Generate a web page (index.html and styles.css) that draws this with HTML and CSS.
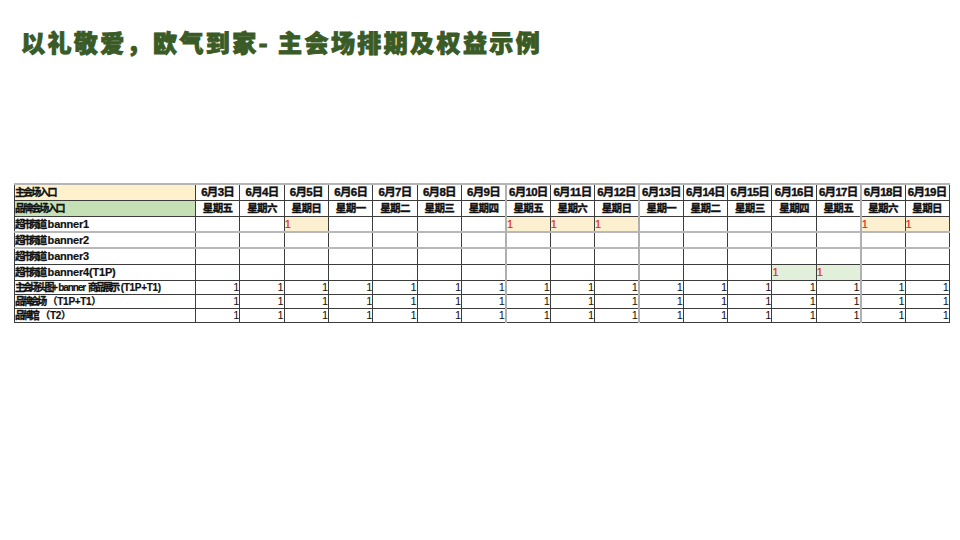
FILE: index.html
```html
<!DOCTYPE html>
<html lang="zh-CN">
<head>
<meta charset="utf-8">
<title>主会场排期及权益示例</title>
<link rel="stylesheet" href="styles.css">
</head>
<body>
<h1 class="title">以礼敬爱，欧气到家- 主会场排期及权益示例</h1>
<table class="sheet">
  <colgroup>
    <col class="c-label">
    <col span="17" class="c-day">
  </colgroup>
  <tbody>
    <tr class="h1row">
      <td class="lbl yl"><span class="cj hd">主会场入口</span></td>
      <td class="date">6月3日</td><td class="date">6月4日</td><td class="date">6月5日</td><td class="date">6月6日</td><td class="date">6月7日</td><td class="date">6月8日</td><td class="date">6月9日</td><td class="date">6月10日</td><td class="date">6月11日</td><td class="date">6月12日</td><td class="date">6月13日</td><td class="date">6月14日</td><td class="date">6月15日</td><td class="date">6月16日</td><td class="date">6月17日</td><td class="date">6月18日</td><td class="date">6月19日</td>
    </tr>
    <tr class="h2row">
      <td class="lbl gl"><span class="cj hd">品牌会场入口</span></td>
      <td class="wk">星期五</td><td class="wk">星期六</td><td class="wk">星期日</td><td class="wk">星期一</td><td class="wk">星期二</td><td class="wk">星期三</td><td class="wk">星期四</td><td class="wk">星期五</td><td class="wk">星期六</td><td class="wk">星期日</td><td class="wk">星期一</td><td class="wk">星期二</td><td class="wk">星期三</td><td class="wk">星期四</td><td class="wk">星期五</td><td class="wk">星期六</td><td class="wk">星期日</td>
    </tr>
    <tr class="brow">
      <td class="lbl"><span class="cj">超市频道</span>banner1</td>
      <td></td><td></td><td class="yc">1</td><td></td><td></td><td></td><td></td><td class="yc">1</td><td class="yc">1</td><td class="yc">1</td><td></td><td></td><td></td><td></td><td></td><td class="yc">1</td><td class="yc">1</td>
    </tr>
    <tr class="brow">
      <td class="lbl"><span class="cj">超市频道</span>banner2</td>
      <td></td><td></td><td></td><td></td><td></td><td></td><td></td><td></td><td></td><td></td><td></td><td></td><td></td><td></td><td></td><td></td><td></td>
    </tr>
    <tr class="brow">
      <td class="lbl"><span class="cj">超市频道</span>banner3</td>
      <td></td><td></td><td></td><td></td><td></td><td></td><td></td><td></td><td></td><td></td><td></td><td></td><td></td><td></td><td></td><td></td><td></td>
    </tr>
    <tr class="brow">
      <td class="lbl"><span class="cj">超市频道</span>banner4(T1P)</td>
      <td></td><td></td><td></td><td></td><td></td><td></td><td></td><td></td><td></td><td></td><td></td><td></td><td></td><td class="gc">1</td><td class="gc">1</td><td></td><td></td>
    </tr>
    <tr class="nrow">
      <td class="lbl sm"><span class="cj">主会场头图+</span><span class="nb">banner</span><span class="cj">商品展示</span>(T1P+T1)</td>
      <td class="n">1</td><td class="n">1</td><td class="n">1</td><td class="n">1</td><td class="n">1</td><td class="n">1</td><td class="n">1</td><td class="n">1</td><td class="n">1</td><td class="n">1</td><td class="n">1</td><td class="n">1</td><td class="n">1</td><td class="n">1</td><td class="n">1</td><td class="n">1</td><td class="n">1</td>
    </tr>
    <tr class="nrow">
      <td class="lbl sm"><span class="cj">品牌会场</span>（T1P+T1）</td>
      <td class="n">1</td><td class="n">1</td><td class="n">1</td><td class="n">1</td><td class="n">1</td><td class="n">1</td><td class="n">1</td><td class="n">1</td><td class="n">1</td><td class="n">1</td><td class="n">1</td><td class="n">1</td><td class="n">1</td><td class="n">1</td><td class="n">1</td><td class="n">1</td><td class="n">1</td>
    </tr>
    <tr class="nrow">
      <td class="lbl sm"><span class="cj">品牌馆</span>（T2）</td>
      <td class="n">1</td><td class="n">1</td><td class="n">1</td><td class="n">1</td><td class="n">1</td><td class="n">1</td><td class="n">1</td><td class="n">1</td><td class="n">1</td><td class="n">1</td><td class="n">1</td><td class="n">1</td><td class="n">1</td><td class="n">1</td><td class="n">1</td><td class="n">1</td><td class="n">1</td>
    </tr>
  </tbody>
</table>
</body>
</html>
```

FILE: styles.css
```css
html, body {
  margin: 0;
  padding: 0;
  background: #ffffff;
}

body {
  width: 960px;
  height: 540px;
  overflow: hidden;
  font-family: "Liberation Sans", "Noto Sans CJK SC", sans-serif;
}

.title {
  margin: 27px 0 0 21px;
  height: 30px;
  line-height: 30px;
  font-family: "Noto Sans CJK SC", sans-serif;
  font-weight: 900;
  font-size: 24px;
  letter-spacing: 2.4px;
  color: #3a5a26;
  -webkit-text-stroke: 0.9px #3a5a26;
  white-space: nowrap;
}

.sheet {
  margin: 126px 0 0 14px;
  border-collapse: collapse;
  table-layout: fixed;
  width: 935px;
  color: #111;
}

.c-label { width: 181px; }
.c-day { width: 44.35px; }

.sheet td {
  border: 1px solid #3c3c3c;
  padding: 0;
  overflow: hidden;
  white-space: nowrap;
  font-family: "Liberation Sans", "Noto Sans CJK SC", sans-serif;
}

.sheet tr:first-child td { border-top: 2px solid #b5b5b5; }

.sheet td:nth-child(9),
.sheet td:nth-child(12),
.sheet td:nth-child(17) {
  border-left: 2px solid #b0b0b0;
}

.sheet tr:nth-child(4) td,
.sheet tr:nth-child(5) td {
  border-top: 2px solid #b8b8b8;
}

.h1row { height: 16px; }
.h2row { height: 16px; }
.brow { height: 16px; }
.nrow { height: 14px; }

.lbl {
  font-weight: 700;
  font-size: 11px;
  padding-left: 1px;
  letter-spacing: -0.2px;
  line-height: 12px;
  -webkit-text-stroke: 0.2px #111;
}

.lbl .cj {
  font-family: "Noto Sans CJK SC", sans-serif;
  font-size: 10px;
  font-weight: 700;
  letter-spacing: -2.6px;
  margin-right: 3px;
  -webkit-text-stroke: 0.3px #111;
}

.lbl .cj.hd {
  letter-spacing: -1.9px;
}

.lbl.sm {
  font-size: 10px;
  letter-spacing: -0.3px;
}

.lbl.sm .nb {
  letter-spacing: -1.1px;
  margin-right: 3px;
}

.yl { background: #fef1cc; }
.gl { background: #c5e0b4; }

.date {
  text-align: center;
  font-weight: 700;
  font-size: 11.5px;
  letter-spacing: -0.7px;
  line-height: 14px;
  -webkit-text-stroke: 0.4px #111;
}

.wk {
  text-align: center;
  font-family: "Noto Sans CJK SC", sans-serif;
  font-weight: 700;
  font-size: 10.5px;
  letter-spacing: -0.6px;
  line-height: 13px;
  -webkit-text-stroke: 0.4px #111;
}

.yc, .gc {
  color: #e02a22;
  font-size: 11px;
  padding-left: 3px;
  line-height: 12px;
  -webkit-text-stroke: 0.2px #e02a22;
}

.yc { background: #fdf0d0; }
.gc { background: #e2efda; }

.n {
  text-align: right;
  font-family: "Liberation Serif", serif;
  font-size: 11px;
  line-height: 12px;
  padding-right: 1px;
}
```
